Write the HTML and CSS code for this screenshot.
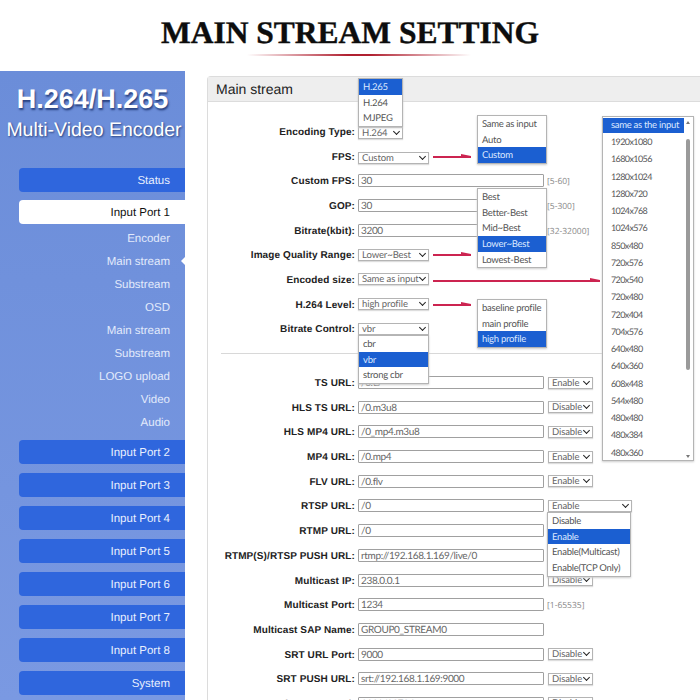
FILE: index.html
```html
<!DOCTYPE html>
<html lang="en">
<head>
    <meta charset="UTF-8">
    <title>Main Stream Setting</title>
    <link rel="stylesheet" href="styles.css">
</head>
<body>
    <div class="page">
        <header class="banner">
            <h1>MAIN STREAM SETTING</h1>
            <div class="banner-line"></div>
        </header>

        <div class="layout">
            <aside class="sidebar">
                <div class="brand">H.264/H.265</div>
                <div class="brand-sub">Multi-Video Encoder</div>

                <nav class="nav">
                    <a class="nav-btn">Status</a>
                    <a class="nav-btn active">Input Port 1</a>
                    <ul class="sub-nav">
                        <li>Encoder</li>
                        <li class="current">Main stream</li>
                        <li>Substream</li>
                        <li>OSD</li>
                        <li>Main stream</li>
                        <li>Substream</li>
                        <li>LOGO upload</li>
                        <li>Video</li>
                        <li>Audio</li>
                    </ul>
                    <a class="nav-btn">Input Port 2</a>
                    <a class="nav-btn">Input Port 3</a>
                    <a class="nav-btn">Input Port 4</a>
                    <a class="nav-btn">Input Port 5</a>
                    <a class="nav-btn">Input Port 6</a>
                    <a class="nav-btn">Input Port 7</a>
                    <a class="nav-btn">Input Port 8</a>
                    <a class="nav-btn">System</a>
                </nav>
            </aside>

            <main class="content">
                <section class="panel">
                    <div class="panel-head">Main stream</div>
                    <div class="panel-body">
                        <div class="row"><label>Encoding Type:</label><div class="select tiny low">H.264</div></div>
                        <div class="row"><label>FPS:</label><div class="select low">Custom</div></div>
                        <div class="row"><label>Custom FPS:</label><input class="field" value="30"><span class="hint">[5-60]</span></div>
                        <div class="row"><label>GOP:</label><input class="field" value="30"><span class="hint">[5-300]</span></div>
                        <div class="row"><label>Bitrate(kbit):</label><input class="field" value="3200"><span class="hint">[32-32000]</span></div>
                        <div class="row"><label>Image Quality Range:</label><div class="select">Lower~Best</div></div>
                        <div class="row"><label>Encoded size:</label><div class="select">Same as input</div></div>
                        <div class="row"><label>H.264 Level:</label><div class="select">high profile</div></div>
                        <div class="row"><label>Bitrate Control:</label><div class="select">vbr</div></div>

                        <hr class="divider">

                        <div class="row"><label>TS URL:</label><input class="field" value="/0.ts"><div class="select tiny">Enable</div></div>
                        <div class="row"><label>HLS TS URL:</label><input class="field" value="/0.m3u8"><div class="select tiny">Disable</div></div>
                        <div class="row"><label>HLS MP4 URL:</label><input class="field" value="/0_mp4.m3u8"><div class="select tiny">Disable</div></div>
                        <div class="row"><label>MP4 URL:</label><input class="field" value="/0.mp4"><div class="select tiny">Enable</div></div>
                        <div class="row"><label>FLV URL:</label><input class="field" value="/0.flv"><div class="select tiny">Enable</div></div>
                        <div class="row"><label>RTSP URL:</label><input class="field" value="/0"><div class="select wide">Enable</div></div>
                        <div class="row"><label>RTMP URL:</label><input class="field" value="/0"></div>
                        <div class="row"><label>RTMP(S)/RTSP PUSH URL:</label><input class="field" value="rtmp://192.168.1.169/live/0"></div>
                        <div class="row"><label>Multicast IP:</label><input class="field" value="238.0.0.1"><div class="select tiny">Disable</div></div>
                        <div class="row"><label>Multicast Port:</label><input class="field" value="1234"><span class="hint">[1-65535]</span></div>
                        <div class="row"><label>Multicast SAP Name:</label><input class="field" value="GROUP0_STREAM0"></div>
                        <div class="row"><label>SRT URL Port:</label><input class="field" value="9000"><div class="select tiny">Disable</div></div>
                        <div class="row"><label>SRT PUSH URL:</label><input class="field" value="srt://192.168.1.169:9000"><div class="select tiny">Disable</div></div>
                        <div class="row"><label>SRT Encryption Password:</label><input class="field" value="1111/00784"><div class="select tiny">Disable</div></div>

                        <!-- opened dropdowns laid over the form -->
                        <ul class="popup pop-encoding">
                            <li class="sel">H.265</li>
                            <li>H.264</li>
                            <li>MJPEG</li>
                        </ul>
                        <ul class="popup pop-fps">
                            <li>Same as input</li>
                            <li>Auto</li>
                            <li class="sel">Custom</li>
                        </ul>
                        <ul class="popup pop-quality">
                            <li>Best</li>
                            <li>Better-Best</li>
                            <li>Mid~Best</li>
                            <li class="sel">Lower~Best</li>
                            <li>Lowest-Best</li>
                        </ul>
                        <ul class="popup pop-level">
                            <li>baseline profile</li>
                            <li>main profile</li>
                            <li class="sel">high profile</li>
                        </ul>
                        <ul class="popup pop-bitrate">
                            <li>cbr</li>
                            <li class="sel">vbr</li>
                            <li>strong cbr</li>
                        </ul>
                        <ul class="popup pop-rtsp">
                            <li>Disable</li>
                            <li class="sel">Enable</li>
                            <li>Enable(Multicast)</li>
                            <li>Enable(TCP Only)</li>
                        </ul>
                        <ul class="popup pop-size">
                            <li class="sel">same as the input</li>
                            <li>1920x1080</li>
                            <li>1680x1056</li>
                            <li>1280x1024</li>
                            <li>1280x720</li>
                            <li>1024x768</li>
                            <li>1024x576</li>
                            <li>850x480</li>
                            <li>720x576</li>
                            <li>720x540</li>
                            <li>720x480</li>
                            <li>720x404</li>
                            <li>704x576</li>
                            <li>640x480</li>
                            <li>640x360</li>
                            <li>608x448</li>
                            <li>544x480</li>
                            <li>480x480</li>
                            <li>480x384</li>
                            <li>480x360</li>
                        </ul>
                        <div class="scrollbar"><div class="thumb"></div></div>

                        <div class="arrow arrow-fps"></div>
                        <div class="arrow arrow-quality"></div>
                        <div class="arrow arrow-size"></div>
                        <div class="arrow arrow-level"></div>
                    </div>
                </section>
            </main>
        </div>
    </div>
</body>
</html>
```

FILE: styles.css
```css
* {
    box-sizing: border-box;
    text-rendering: geometricPrecision;
}

html, body {
    margin: 0;
    height: 700px;
    overflow: hidden;
    background-color: white;
}

.page {
    width: 700px;
    height: 700px;
    overflow: hidden;
    font-family: "Liberation Sans", Arial, sans-serif;
}

.banner {
    height: 71px;
    padding-top: 15px;
    text-align: center;
}

.banner h1 {
    margin: 0;
    font-family: "Liberation Serif", serif;
    font-size: 31.5px;
    line-height: 36px;
    font-weight: bold;
    color: #0d0d0d;
    -webkit-text-stroke: 0.4px #0d0d0d;
}

.banner-line {
    width: 224px;
    height: 2px;
    margin: 3px 0 0 247px;
    background: linear-gradient(to right, rgba(176, 32, 48, 0), #b02030 45%, #b02030 55%, rgba(176, 32, 48, 0));
}

.layout {
    display: flex;
    height: 629px;
}

/* sidebar */
.sidebar {
    width: 185px;
    flex-shrink: 0;
    padding-top: 12px;
    text-align: center;
    color: white;
    background: linear-gradient(to bottom, #6b8dd9, #7a99e2);
}

.brand {
    font-size: 27px;
    line-height: 32px;
    font-weight: bold;
    text-shadow: 1px 2px 2px #27407f;
}

.brand-sub {
    font-size: 19.5px;
    line-height: 30px;
    white-space: nowrap;
    padding-left: 3px;
    text-shadow: 1px 1px 2px #27407f;
}

.nav {
    margin-top: 23px;
    padding-left: 19px;
}

.nav-btn {
    display: block;
    height: 24px;
    margin-bottom: 9px;
    padding-right: 15px;
    font-size: 11.5px;
    line-height: 26px;
    text-align: right;
    color: #e8effd;
    background-color: #2f66dd;
    border-radius: 4px 0 0 4px;
}

.nav-btn.active {
    margin-top: -1px;
    margin-bottom: 3px;
    color: #111;
    background-color: white;
}

.sub-nav {
    list-style: none;
    margin: 0 0 6px;
    padding: 0;
}

.sub-nav li {
    position: relative;
    height: 23px;
    padding-right: 15px;
    font-size: 11.5px;
    line-height: 25px;
    text-align: right;
    color: #e2eafb;
}

.sub-nav .current::after {
    content: "";
    position: absolute;
    right: 0;
    top: 7px;
    border: 4px solid transparent;
    border-right-color: white;
    border-left-width: 0;
}

/* main panel */
.content {
    flex: 1;
    padding: 5px 0 0 22px;
}

.panel {
    border: 1px solid #dcdcdc;
    border-right: none;
    border-bottom: none;
    border-radius: 4px 0 0 0;
    height: 640px;
}

.panel-head {
    height: 25px;
    padding-left: 8px;
    font-size: 14px;
    line-height: 24px;
    color: #222;
    background-color: #eeeeee;
    border-bottom: 1px solid #dcdcdc;
}

.panel-body {
    position: relative;
    padding-top: 17px;
}

.row {
    display: flex;
    align-items: center;
    height: 24.7px;
}

.row label {
    width: 147px;
    margin-right: 3px;
    padding-top: 2px;
    font-size: 10px;
    font-weight: bold;
    letter-spacing: 0.1px;
    text-align: right;
    white-space: nowrap;
    color: #222;
}

.field {
    width: 186px;
    height: 13px;
    margin: 0 4px 0 0;
    padding: 1px 2px 0;
    font-family: Lato, sans-serif;
    font-size: 10px;
    letter-spacing: -0.35px;
    color: #666;
    background-color: white;
    border: 1px solid #a0a0a0;
    border-radius: 1px;
}

.select {
    position: relative;
    width: 71px;
    height: 12px;
    padding-left: 3px;
    font-family: Lato, sans-serif;
    font-size: 9.5px;
    letter-spacing: -0.1px;
    line-height: 11px;
    white-space: nowrap;
    color: #666;
    background-color: white;
    border: 1px solid #b4b4b4;
    box-shadow: 0 1px 1px #ddd;
}

.select::after {
    content: "";
    position: absolute;
    right: 3px;
    top: 1px;
    width: 4px;
    height: 4px;
    border-right: 1.5px solid #222;
    border-bottom: 1.5px solid #222;
    transform: rotate(45deg);
}

.select.tiny {
    width: 45px;
}

.select.wide {
    width: 84px;
}

.select.low {
    margin-top: 4px;
}

.hint {
    margin-left: -1px;
    padding-top: 2px;
    font-family: "Open Sans", sans-serif;
    font-size: 8.5px;
    color: #888;
}

.divider {
    margin: 12px 13px 16px;
    border: none;
    border-top: 1px solid #d8d8d8;
}

/* opened dropdowns */
.popup {
    position: absolute;
    list-style: none;
    margin: 0;
    padding: 0;
    font-family: Lato, sans-serif;
    font-size: 9.5px;
    letter-spacing: -0.25px;
    color: #555;
    background-color: white;
    border: 1px solid #b4b4b4;
    box-shadow: 0 1px 2px #ccc;
}

.popup li {
    height: 15.7px;
    padding-left: 4px;
    line-height: 17px;
    white-space: nowrap;
}

.popup .sel {
    color: #dce8ff;
    background-color: #1b5fd1;
}

.pop-encoding {
    left: 150px;
    top: -24px;
    width: 45px;
}

.pop-fps {
    left: 269px;
    top: 13px;
    width: 70px;
}

.pop-quality {
    left: 269px;
    top: 86px;
    width: 70px;
}

.pop-level {
    left: 269px;
    top: 197px;
    width: 70px;
}

.pop-bitrate {
    left: 150px;
    top: 233px;
    width: 71px;
}

.pop-rtsp {
    left: 339px;
    top: 410px;
    width: 84px;
}

.pop-size {
    left: 394px;
    top: 14px;
    width: 92px;
    height: 345px;
    padding-top: 1px;
    font-size: 9px;
    letter-spacing: -0.6px;
}

.pop-size li {
    height: 17.25px;
    padding-left: 8px;
    line-height: 15.5px;
}

.pop-size .sel {
    width: 81px;
    height: 15px;
    margin-bottom: 1px;
    font-size: 9.5px;
    letter-spacing: -0.3px;
    line-height: 16px;
}

.scrollbar {
    position: absolute;
    left: 476px;
    top: 15px;
    width: 8px;
    height: 343px;
}

.scrollbar::before, .scrollbar::after {
    content: "";
    position: absolute;
    left: 2px;
    border-left: 2px solid transparent;
    border-right: 2px solid transparent;
}

.scrollbar::before {
    top: 4px;
    border-bottom: 3px solid #777;
}

.scrollbar::after {
    bottom: 2px;
    border-top: 3px solid #777;
}

.thumb {
    width: 4px;
    height: 231px;
    margin: 22px 0 0 2px;
    background-color: #9a9a9a;
    border-radius: 2px;
}

/* red arrows between the selects and their lists */
.arrow {
    position: absolute;
    left: 225px;
    height: 1.5px;
    width: 38px;
    background-color: #cc2450;
}

.arrow::after {
    content: "";
    position: absolute;
    right: 0;
    top: -2px;
    border-left: 10px solid #cc2450;
    border-top: 2.75px solid transparent;
    border-bottom: 2.75px solid transparent;
}

.arrow-fps {
    top: 54px;
}

.arrow-quality {
    top: 152px;
}

.arrow-size {
    top: 178px;
    width: 167px;
}

.arrow-level {
    top: 202px;
}
```
